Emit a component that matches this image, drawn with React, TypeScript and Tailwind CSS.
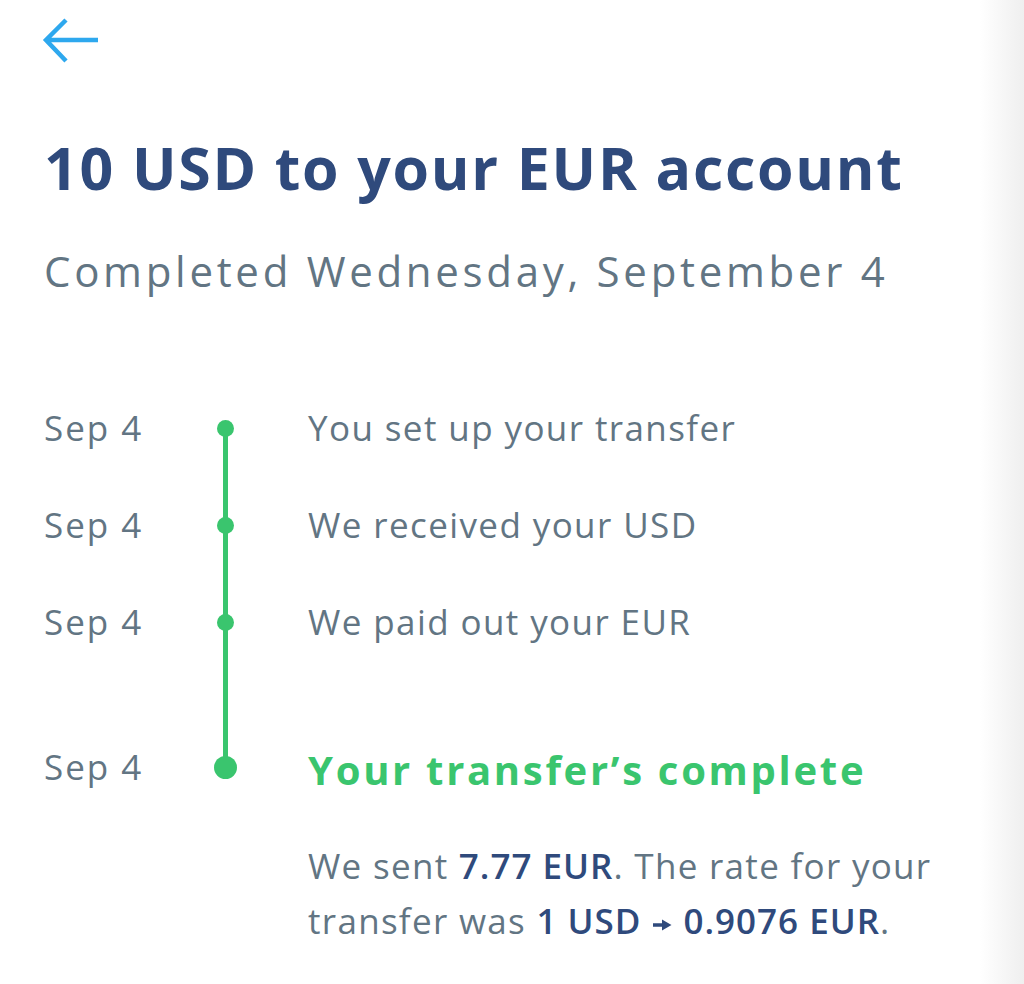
const steps = [
  { date: "Sep 4", text: "You set up your transfer" },
  { date: "Sep 4", text: "We received your USD" },
  { date: "Sep 4", text: "We paid out your EUR" },
];

function BackArrow() {
  return (
    <svg width="58" height="46" viewBox="0 0 58 46" fill="none" className="block">
      <path
        d="M56 22H4M24 2L4 22L24 43"
        stroke="#2ea8ee"
        strokeWidth="4.5"
        strokeLinejoin="miter"
      />
    </svg>
  );
}

function SmallArrow() {
  return (
    <svg width="20" height="12" viewBox="0 0 20 12" className="inline-block align-[3px] mx-[11px]">
      <path d="M1 6H12" stroke="#2f4a7c" strokeWidth="3.5" />
      <path d="M10 0.5L19.5 6L10 11.5Z" fill="#2f4a7c" />
    </svg>
  );
}

export default function App() {
  return (
    <div
      className="w-[1024px] h-[984px] flex bg-white overflow-hidden"
      style={{ fontFamily: "'Open Sans', Lato, sans-serif" }}
    >
      <div className="flex-1 pl-[44px] pt-[18px]">
        <button className="-ml-[2px] block">
          <BackArrow />
        </button>

        <h1 className="mt-[68px] text-[59px] leading-[71px] font-bold text-[#2f4a7c] tracking-[1.7px] whitespace-nowrap">
          10 USD to your EUR account
        </h1>
        <p className="mt-[43px] text-[42px] leading-[50px] text-[#627583] tracking-[3.7px] whitespace-nowrap">
          Completed Wednesday, September 4
        </p>

        <div className="relative mt-[111px]">
          <div className="absolute left-[179px] top-[21px] h-[338px] w-[5px] bg-[#3ac56e]" />

          {steps.map((s, i) => (
            <div
              key={i}
              className={`flex items-center h-[42px] ${i === 2 ? "mb-[103px]" : "mb-[55px]"}`}
            >
              <span className="w-[160px] text-[35px] leading-[42px] text-[#627583] tracking-[2px]">{s.date}</span>
              <div className="w-[42px] flex justify-center">
                <div className="w-[17px] h-[17px] rounded-full bg-[#3ac56e]" />
              </div>
              <span className="ml-[62px] text-[35px] leading-[42px] text-[#627583] tracking-[1.4px]">{s.text}</span>
            </div>
          ))}

          <div className="flex items-start">
            <span className="w-[160px] text-[35px] leading-[42px] text-[#627583] tracking-[2px]">Sep 4</span>
            <div className="w-[42px] h-[42px] flex items-center justify-center">
              <div className="w-[23px] h-[23px] rounded-full bg-[#3ac56e]" />
            </div>
            <div className="ml-[62px]">
              <h2 className="mt-[3px] text-[40px] leading-[42px] font-bold text-[#3ac56e] tracking-[2.7px] whitespace-nowrap">
                Your transfer’s complete
              </h2>
              <p className="mt-[47px] text-[35px] leading-[55px] text-[#627583] tracking-[1.3px] whitespace-nowrap">
                We sent <span className="font-semibold text-[#2f4a7c] tracking-[1px]">7.77 EUR</span>. The rate for your
                <br />
                transfer was{" "}
                <span className="font-semibold text-[#2f4a7c] tracking-[1px]">
                  1 USD
                  <SmallArrow />
                  0.9076 EUR
                </span>
                .
              </p>
            </div>
          </div>
        </div>
      </div>
      <div className="w-[44px] h-full bg-gradient-to-r from-white to-[#efefef]" />
    </div>
  );
}
